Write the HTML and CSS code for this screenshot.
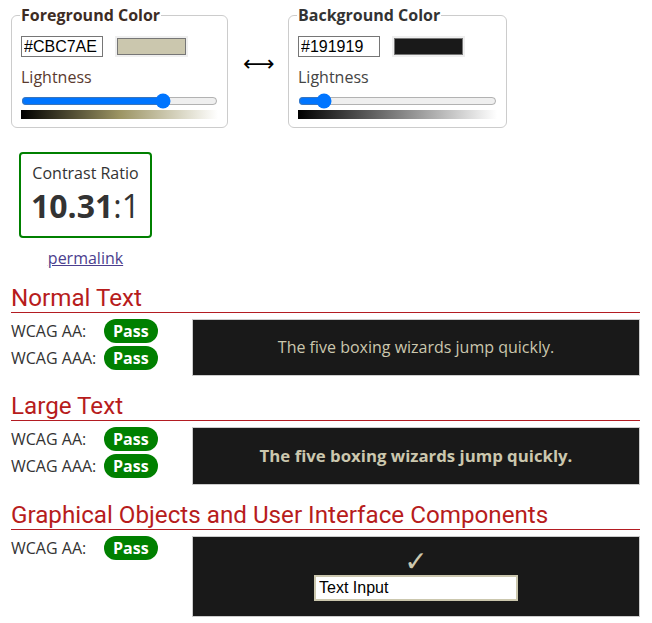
FILE: index.html
```html
<!DOCTYPE html>
<html lang="en">
<head>
<meta charset="utf-8">
<title>Contrast Checker</title>
<link rel="stylesheet" href="styles.css">
</head>
<body>
<main class="page">
  <div class="pickers">
    <fieldset class="picker picker-fg">
      <legend>Foreground Color</legend>
      <div class="color-row">
        <input class="hex" type="text" value="#CBC7AE">
        <span class="swatch"><span class="swatch-inner swatch-fg"></span></span>
      </div>
      <label class="light-label">Lightness</label>
      <input class="range" type="range" min="0" max="100" value="74">
      <div class="grad grad-fg"></div>
    </fieldset>
    <div class="swap">&#x27F7;</div>
    <fieldset class="picker picker-bg">
      <legend>Background Color</legend>
      <div class="color-row">
        <input class="hex" type="text" value="#191919">
        <span class="swatch"><span class="swatch-inner swatch-bg"></span></span>
      </div>
      <label class="light-label">Lightness</label>
      <input class="range" type="range" min="0" max="100" value="10">
      <div class="grad grad-bg"></div>
    </fieldset>
  </div>

  <div class="ratio">
    <div class="ratio-box">
      <div class="ratio-title">Contrast Ratio</div>
      <div class="ratio-value"><b>10.31</b>:1</div>
    </div>
    <a class="permalink" href="#">permalink</a>
  </div>

  <section class="section">
    <h2>Normal Text</h2>
    <div class="result">
      <div class="checks">
        <div class="check"><span class="level">WCAG AA:</span><span class="pass">Pass</span></div>
        <div class="check"><span class="level">WCAG AAA:</span><span class="pass">Pass</span></div>
      </div>
      <div class="sample sample-normal">The five boxing wizards jump quickly.</div>
    </div>
  </section>

  <section class="section">
    <h2>Large Text</h2>
    <div class="result">
      <div class="checks">
        <div class="check"><span class="level">WCAG AA:</span><span class="pass">Pass</span></div>
        <div class="check"><span class="level">WCAG AAA:</span><span class="pass">Pass</span></div>
      </div>
      <div class="sample sample-large">The five boxing wizards jump quickly.</div>
    </div>
  </section>

  <section class="section">
    <h2>Graphical Objects and User Interface Components</h2>
    <div class="result">
      <div class="checks">
        <div class="check"><span class="level">WCAG AA:</span><span class="pass">Pass</span></div>
      </div>
      <div class="sample sample-ui">
        <div class="tick">&#x2713;</div>
        <input class="ui-input" type="text" value="Text Input">
      </div>
    </div>
  </section>
</main>
</body>
</html>
```
FILE: styles.css
```css
* { box-sizing: border-box; }
html, body { margin: 0; padding: 0; background: #fff; }
body {
  font-family: "Open Sans", "Liberation Sans", sans-serif;
  font-size: 16px;
  line-height: 22px;
  color: #333;
}
.page { padding: 4px 12px 0 11px; }

.pickers { display: flex; align-items: center; }
.picker {
  margin: 0;
  border: 1px solid #ccc;
  border-radius: 6px;
  padding: 10px 9px 8px;
}
.picker-fg { width: 217px; }
.picker-bg { width: 219px; }
.picker legend {
  font-weight: 700;
  font-size: 16px;
  line-height: 22px;
  padding: 0 1px;
  margin-left: -1px;
}
.picker-fg legend { color: #3d2c24; }
.color-row { display: flex; align-items: center; gap: 12px; height: 21px; }
.hex {
  width: 82px;
  height: 21px;
  margin: 0;
  padding: 0 2px;
  border: 1px solid #767676;
  font-family: "Liberation Sans", Arial, sans-serif;
  font-size: 16px;
  color: #000;
  background: #fff;
}
.swatch {
  display: flex;
  width: 73px;
  height: 21px;
  padding: 2px 2px;
  background: #efefef;
}
.swatch-inner { flex: 1; border: 1px solid #767676; }
.swatch-fg { background: #cbc7ae; }
.swatch-bg { background: #191919; }
.light-label { display: block; margin-top: 9px; line-height: 22px; color: #444; }
.picker-fg .light-label { color: #5a3a2e; }
.range {
  display: block;
  width: 100%;
  height: 16px;
  margin: 5px 0 0;
}
.grad { height: 9px; margin-top: 1px; }
.grad-fg { background: linear-gradient(to right, #000, hsl(52, 22%, 50%), #fff); }
.grad-bg { background: linear-gradient(to right, #000, #808080, #fff); }

.swap {
  width: 30px;
  margin: 0 15px;
  text-align: center;
  font-family: "DejaVu Sans", sans-serif;
  font-size: 22px;
  line-height: 30px;
  color: #000;
  position: relative;
  top: -2px;
}

.ratio {
  display: flex;
  flex-direction: column;
  align-items: center;
  width: 133px;
  margin: 24px 0 0 8px;
}
.ratio-box {
  width: 133px;
  border: 2px solid #008000;
  border-radius: 4px;
  padding: 8px 4px;
  text-align: center;
}
.ratio-title { line-height: 22px; }
.ratio-value { font-size: 32px; line-height: 44px; }
.ratio-value b { font-weight: 700; }
.permalink {
  margin-top: 9px;
  color: #4b3e8e;
  text-decoration: underline;
}

.section { margin-top: 15px; }
.section + .section { margin-top: 16px; }
.section h2 {
  margin: 0;
  font-family: Roboto, "Liberation Sans", sans-serif;
  font-weight: 400;
  font-size: 24.2px;
  line-height: 28px;
  color: #b71c1c;
  border-bottom: 1px solid #b31c22;
}
.result { display: flex; align-items: flex-start; margin-top: 6px; }
.checks { width: 181px; flex: none; display: flex; flex-direction: column; gap: 3px; }
.check { display: flex; align-items: center; height: 24px; }
.level { width: 93px; }
.pass {
  display: inline-block;
  height: 24px;
  line-height: 24px;
  padding: 0 9px;
  border-radius: 12px;
  background: #008000;
  color: #fff;
  font-weight: 700;
}
.sample {
  flex: 1;
  background: #191919;
  border: 1px solid #ccc;
  color: #cbc7ae;
  text-align: center;
}
.sample-normal { padding: 16px 0; line-height: 23px; }
.sample-large { padding: 16px 0; font-size: 16.8px; font-weight: 700; line-height: 24px; }
.sample-ui {
  display: flex;
  flex-direction: column;
  align-items: center;
  padding: 12px 0 15px;
}
.tick {
  font-family: "DejaVu Sans", sans-serif;
  font-size: 28px;
  line-height: 26px;
}
.ui-input {
  width: 204px;
  height: 26px;
  margin: 0;
  padding: 0 3px;
  border: 2px solid #cbc7ae;
  background: #fff;
  color: #000;
  font-family: "Liberation Sans", Arial, sans-serif;
  font-size: 16px;
}
```
